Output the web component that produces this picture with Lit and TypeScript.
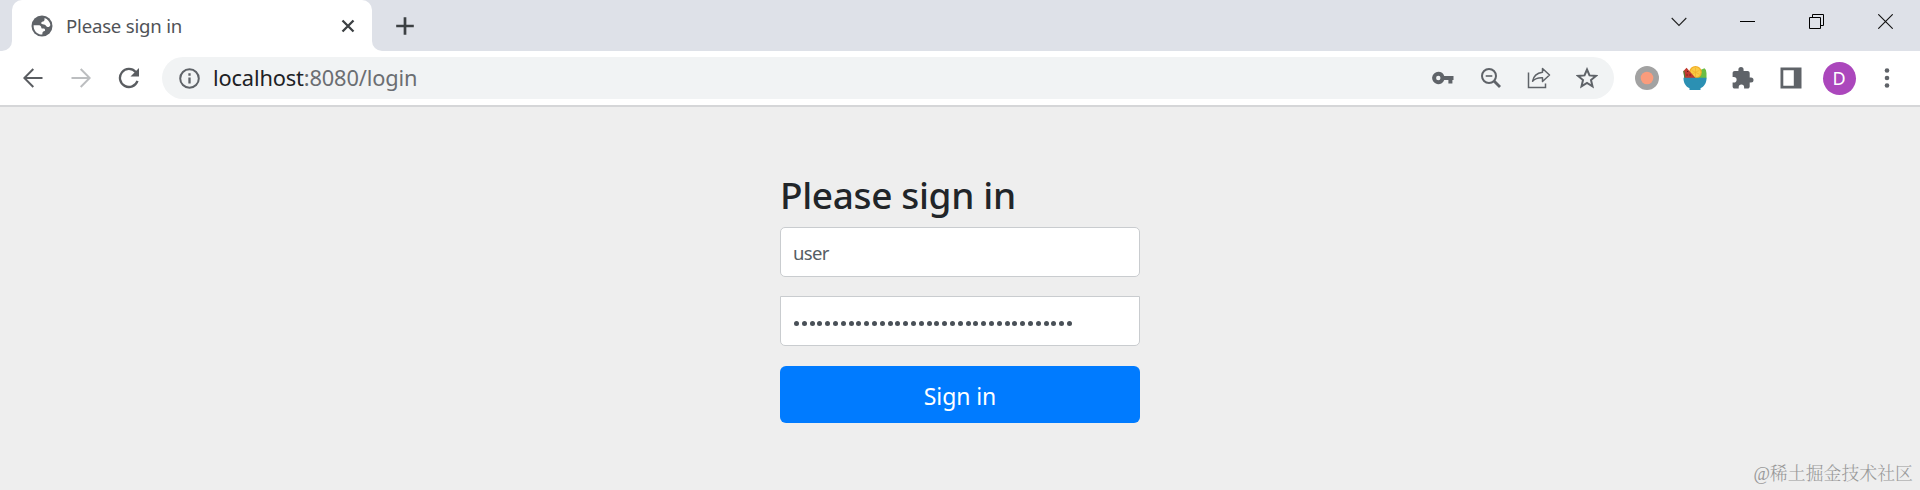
import { LitElement, html, css, svg } from "lit";
import { customElement } from "lit/decorators.js";

const icon = (w: number, h: number, body: unknown) =>
  html`<svg width=${w} height=${h} viewBox="0 0 ${w} ${h}" fill="none">${body}</svg>`;

const icons = {
  globe: icon(22, 22, svg`<circle cx="11" cy="11" r="10.5" fill="#5f6368"/>
    <path fill="#fff" d="M13.500 3c3 1 5.500 3.800 5.900 7-.4 1.400-1.500 2.200-2.900 2-1.500-.2-1.500-1.600-2.600-2.200-1.200-.6-3.200 0-3.600-1.200-.4-1.300.6-2.100 1.700-2.200 1.300-.1 1.700-.9 1.500-3.400zM2.600 10.200h4.700c1.500 0 2.900.6 3 2.200.1.900.7 1.300 1.500 1.200 1.300-.1 2.200.3 2.300 1.500.1 1.100-1 1.300-1.800 1.500-.9.300-.8 1.600-1 2.900-4.900.3-8.900-3.700-8.700-9.300z"/>`),
  tabClose: icon(14, 14, svg`<path d="M1.500 1.500l11 11M12.500 1.500l-11 11" stroke="#3c4043" stroke-width="2.300"/>`),
  plus: icon(18, 18, svg`<path d="M9 .2v17.600M.2 9h17.600" stroke="#3c4043" stroke-width="2.700"/>`),
  chevron: icon(16, 10, svg`<path d="M.7 1l7.300 7.500L15.300 1" stroke="#222" stroke-width="1.100"/>`),
  minimize: icon(15, 15, svg`<path d="M0 7.500h15" stroke="#000"/>`),
  restore: icon(15, 15, svg`<path d="M.5 3.500h11v11H.5zM3.500 3.500v-3h11v11h-3" stroke="#000"/>`),
  close: icon(15, 15, svg`<path d="M.3.3l14.400 14.400M14.700.3L.3 14.700" stroke="#111" stroke-width="1.100"/>`),
  back: icon(20, 20, svg`<path d="M19.500 10H1.500M10.300 1L1.300 10l9 9" stroke="#5a5d61" stroke-width="2"/>`),
  forward: icon(20, 20, svg`<path d="M.5 10h18M9.700 1l9 9-9 9" stroke="#bcbec0" stroke-width="2"/>`),
  reload: icon(22, 22, svg`<path d="M17.700 5A9 9 0 1 0 19.500 13.800" stroke="#5a5d61" stroke-width="2.300"/><path d="M21 1v8.500h-8.500z" fill="#5a5d61"/>`),
  info: icon(21, 21, svg`<circle cx="10.500" cy="10.500" r="9.300" stroke="#5f6368" stroke-width="2"/><path d="M10.500 9.500v6M10.500 5.300v2.400" stroke="#5f6368" stroke-width="2.300"/>`),
  key: icon(22, 14, svg`<path fill="#5f6368" fill-rule="evenodd" d="M6.300.8a6.200 6.200 0 1 0 5.900 8.200h4.200v3.600h4V9h1.100V5H12.200A6.200 6.200 0 0 0 6.300.8zm0 4a2.200 2.200 0 1 1 0 4.400 2.200 2.200 0 0 1 0-4.400z"/>`),
  zoomOut: icon(20, 20, svg`<circle cx="8" cy="8" r="7" stroke="#5f6368" stroke-width="2"/><path d="M4.700 8h6.600" stroke="#5f6368" stroke-width="1.600"/><path d="M13 13l6 6" stroke="#5f6368" stroke-width="2.800"/>`),
  share: icon(24, 22, svg`<path d="M1.500 5.500v15h17v-4" stroke="#5f6368" stroke-width="1.500"/><path d="M15.500 1.500l7 6.500-7 6.500v-3.800c-4.500-.2-7.600.8-9.900 3.500.8-5 4-8.200 9.900-9z" stroke="#5f6368" stroke-width="1.500" stroke-linejoin="round"/>`),
  star: icon(22, 22, svg`<path d="M11 2.500l2.500 5.900 6.400.5-4.900 4.200 1.500 6.200L11 16l-5.500 3.300L7 13.100 2.100 8.900l6.400-.5z" stroke="#5f6368" stroke-width="2"/>`),
  record: icon(24, 24, svg`<circle cx="12" cy="12" r="12" fill="#a2a2a2"/><circle cx="12" cy="12" r="6.300" fill="#fa9c7c"/>`),
  bowl: icon(24, 24, svg`<path d="M15 12.500V5L21.500 2.200q2.300 1.500 2 5V12.500z" fill="#6bbd45"/>
    <circle cx="12.500" cy="6.300" r="6.300" fill="#f2ae24"/><circle cx="12.500" cy="6.300" r="5.100" fill="#fbcb45"/>
    <path d="M12.500 2v9M8.500 4.300l8 4M8.500 8.300l8-4" stroke="#f0b02c" stroke-width=".7"/>
    <path d="M3.500 1.800L13 12.500H1.500L.5 5z" fill="#c0392f"/><path d="M.8 4.800L2 12.500" stroke="#527d32" stroke-width="1.200"/>
    <path d="M4 5.500h1.200M6.500 9h1.200M3.500 9h1.200" stroke="#5a1c1a" stroke-width="1.200"/>
    <path d="M.5 11.800h23c.2 5.200-2.300 8.900-6 10.500V24h-11v-1.700C2.800 20.700.3 17 .5 11.800z" fill="#2b90b3"/>`),
  puzzle: icon(22, 22, svg`<path fill="#5f6368" d="M19 10.500h-1.300V6.200c0-1.200-.9-2.100-2.100-2.100h-4V2.700a2.600 2.600 0 0 0-5.200 0v1.400H2.700C1.500 4.100.6 5 .6 6.200v3.700h1.200a2.800 2.800 0 0 1 0 5.600H.6v3.900c0 1.200.9 2.100 2.100 2.100h4v-1.200a2.700 2.700 0 0 1 5.400 0v1.200h3.500c1.200 0 2.100-.9 2.100-2.100v-3.900H19a2.500 2.500 0 0 0 0-5z"/>`),
  panel: icon(22, 22, svg`<path fill="#5f6368" fill-rule="evenodd" d="M.5.5h21v21H.5zM3.300 3.300v15.400h10.500V3.300z"/>`),
  menu: icon(6, 22, svg`<g fill="#5f6368"><circle cx="3" cy="3.500" r="2.300"/><circle cx="3" cy="11" r="2.300"/><circle cx="3" cy="18.500" r="2.300"/></g>`),
};

@customElement("browser-tabs")
class BrowserTabs extends LitElement {
  static styles = css`
    :host { display: flex; height: 51px; background: #dee1e8; font-family: "Noto Sans", sans-serif; }
    svg { display: block; flex: none; }
    .edge { width: 12px; background: #fff; }
    .edge i { display: block; height: 51px; background: #dee1e8; }
    .left i { border-bottom-right-radius: 10px; }
    .right i { border-bottom-left-radius: 10px; }
    .crown { background: #dee1e8; }
    .tab { width: 360px; height: 51px; box-sizing: border-box; display: flex; align-items: center; background: #fff; border-radius: 10px 10px 0 0; padding: 0 17px 0 19px; }
    .title { flex: 1; margin-left: 13px; font-size: 18.6px; line-height: 24px; color: #505357; letter-spacing: -0.2px; }
    .new { display: flex; align-items: center; margin-left: 12px; }
    .controls { display: flex; margin-left: auto; height: 43px; }
    .controls span { width: 69px; display: flex; align-items: center; justify-content: center; }
  `;
  render() {
    return html`
      <div class="edge left"><i></i></div>
      <div class="crown"><div class="tab">${icons.globe}<span class="title">Please sign in</span>${icons.tabClose}</div></div>
      <div class="edge right"><i></i></div>
      <div class="new">${icons.plus}</div>
      <div class="controls">
        <span>${icons.chevron}</span><span>${icons.minimize}</span><span>${icons.restore}</span><span>${icons.close}</span>
      </div>`;
  }
}

@customElement("browser-toolbar")
class BrowserToolbar extends LitElement {
  static styles = css`
    :host { display: flex; align-items: center; height: 56px; box-sizing: border-box; padding: 0 9px; background: #fff; border-bottom: 2px solid #d5d6d8; font-family: "Noto Sans", sans-serif; }
    svg { display: block; flex: none; }
    .slot { width: 48px; height: 42px; flex: none; display: flex; align-items: center; justify-content: center; }
    .omni { width: 1452px; height: 42px; box-sizing: border-box; margin: 0 9px; display: flex; align-items: center; border-radius: 21px; background: #f1f3f4; padding: 0 3px 0 17px; }
    .url { flex: 1; margin-left: 13px; font-size: 21.8px; letter-spacing: -0.15px; line-height: 40px; padding-bottom: 1px; color: #6b6e72; }
    .url b { font-weight: 400; color: #202124; }
    .avatar { width: 33px; height: 33px; border-radius: 50%; background: #ab47bc; color: #fff; font-size: 18px; line-height: 33px; text-align: center; }
  `;
  render() {
    return html`
      <span class="slot">${icons.back}</span><span class="slot">${icons.forward}</span><span class="slot">${icons.reload}</span>
      <div class="omni">${icons.info}<span class="url"><b>localhost</b>:8080/login</span>
        ${[icons.key, icons.zoomOut, icons.share, icons.star].map((i) => html`<span class="slot">${i}</span>`)}
      </div>
      ${[icons.record, icons.bowl, icons.puzzle, icons.panel].map((i) => html`<span class="slot">${i}</span>`)}
      <span class="slot"><span class="avatar">D</span></span>
      <span class="slot">${icons.menu}</span>`;
  }
}

@customElement("sign-in-form")
class SignInForm extends LitElement {
  static styles = css`
    :host { display: block; width: 360px; font-family: "Noto Sans", sans-serif; }
    .heading { margin: 0 0 9px; font-size: 37px; letter-spacing: -0.35px; line-height: 46px; font-weight: 500; color: #212529; white-space: nowrap; }
    .field { display: block; width: 360px; height: 50px; box-sizing: border-box; margin: 0 0 19px; padding: 0 12px; border: 1px solid #c9cccf; border-radius: 5px; background: #fff; color: #565d64; font: 18.5px/46px "Noto Sans", sans-serif; letter-spacing: -0.7px; outline: none; }
    .secret { border-radius: 0 0 5px 5px; margin-bottom: 20px; display: flex; align-items: center; gap: 2.8px; padding: 5px 13px 0; }
    .dot { width: 5px; height: 5px; border-radius: 50%; background: #495057; flex: none; }
    .submit { display: block; width: 360px; height: 57px; border: 0; border-radius: 6px; background: #007bff; color: #fff; font: 23px/57px "Noto Sans", sans-serif; letter-spacing: -0.1px; padding: 2px 0 0; }
  `;
  render() {
    return html`
      <h2 class="heading">Please sign in</h2>
      <input class="field" .value=${"user"} />
      <div class="field secret">${Array.from({ length: 36 }, () => html`<i class="dot"></i>`)}</div>
      <button class="submit">Sign in</button>`;
  }
}

@customElement("app-root")
class AppRoot extends LitElement {
  static styles = css`
    :host { display: block; height: 490px; overflow: hidden; background: #eee; }
    .page { position: relative; height: 383px; box-sizing: border-box; padding-top: 65px; display: flex; justify-content: center; align-items: flex-start; }
    .mark { position: absolute; right: 7px; bottom: 3px; font: 300 17.9px/26px "Liberation Serif", "Noto Serif CJK SC", "Noto Sans CJK SC", serif; color: #999; white-space: nowrap; }
  `;
  render() {
    return html`
      <browser-tabs></browser-tabs>
      <browser-toolbar></browser-toolbar>
      <div class="page"><sign-in-form></sign-in-form><span class="mark">@稀土掘金技术社区</span></div>`;
  }
}
